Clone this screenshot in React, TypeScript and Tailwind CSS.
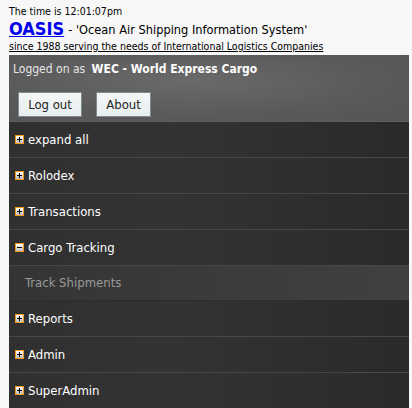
import React from "react";

const menu = [
  { label: "expand all", open: false },
  { label: "Rolodex", open: false },
  { label: "Transactions", open: false },
  { label: "Cargo Tracking", open: true, children: ["Track Shipments"] },
  { label: "Reports", open: false },
  { label: "Admin", open: false },
  { label: "SuperAdmin", open: false },
];

const font = { fontFamily: "'DejaVu Sans Condensed', 'DejaVu Sans', sans-serif" };

function ToggleIcon({ open }: { open: boolean }) {
  return (
    <span className="relative block h-[9px] w-[9px] shrink-0 border border-[#f39a1c] bg-[linear-gradient(#ffffff,#bdbdbd)]">
      <span className="absolute left-[1px] top-[3px] h-[1px] w-[5px] bg-black" />
      {!open && <span className="absolute left-[3px] top-[1px] h-[5px] w-[1px] bg-black" />}
    </span>
  );
}

export default function App() {
  return (
    <div className="min-h-[408px] bg-[#f7f7f7] px-[9px] pt-[3px] text-black" style={font}>
      <div className="h-[16px] text-[10.5px] leading-[16px]">The time is 12:01:07pm</div>
      <div className="flex h-[20px] items-end leading-[20px]">
        <a href="#" className="text-[18px] font-bold leading-[20px] text-[#0000ee] underline">
          OASIS
        </a>
        <span className="ml-[4px] text-[12.7px] leading-[18px]">- 'Ocean Air Shipping Information System'</span>
      </div>
      <div className="h-[14px] text-[10.5px] leading-[14px] underline">
        since 1988 serving the needs of International Logistics Companies
      </div>

      <div className="mt-[2px] w-[400px]">
        <div className="h-[66px] bg-[radial-gradient(ellipse_at_45%_40%,#6a6a6a_0%,#5a5a5a_60%,#545454_100%)] px-[4px] pt-[6px]">
          <div className="text-[12px] leading-[16px] text-[#e6e6e6]">
            Logged on as <span className="ml-[3px] font-bold text-white">WEC - World Express Cargo</span>
          </div>
          <div className="mt-[15px] flex gap-[14px] pl-[5px]">
            <button className="h-[25px] w-[64px] border border-[#7d8b91] bg-[linear-gradient(#f6f6f6,#e7edef)] text-[13px] text-[#222]">
              Log out
            </button>
            <button className="h-[25px] w-[55px] border border-[#7d8b91] bg-[linear-gradient(#f6f6f6,#e7edef)] text-[13px] text-[#222]">
              About
            </button>
          </div>
        </div>
        <div className="h-[1px] bg-[#5e5e5e]" />
        {menu.map((m) => (
          <div key={m.label}>
            <div className="flex h-[36px] items-center gap-[4px] border-b border-[#474747] bg-[linear-gradient(to_right,#303030,#333333_40%,#2a2a2a)] pl-[6px] text-[13px] text-white">
              <ToggleIcon open={m.open} />
              <span>{m.label}</span>
            </div>
            {m.open &&
              m.children?.map((c) => (
                <div key={c} className="flex h-[35px] items-center border-b border-[#2c2c2c] bg-[linear-gradient(to_right,#343434,#3c3c3c_60%,#404040)] pl-[16px] text-[13px] text-[#9a9a9a]">
                  {c}
                </div>
              ))}
          </div>
        ))}
      </div>
    </div>
  );
}
